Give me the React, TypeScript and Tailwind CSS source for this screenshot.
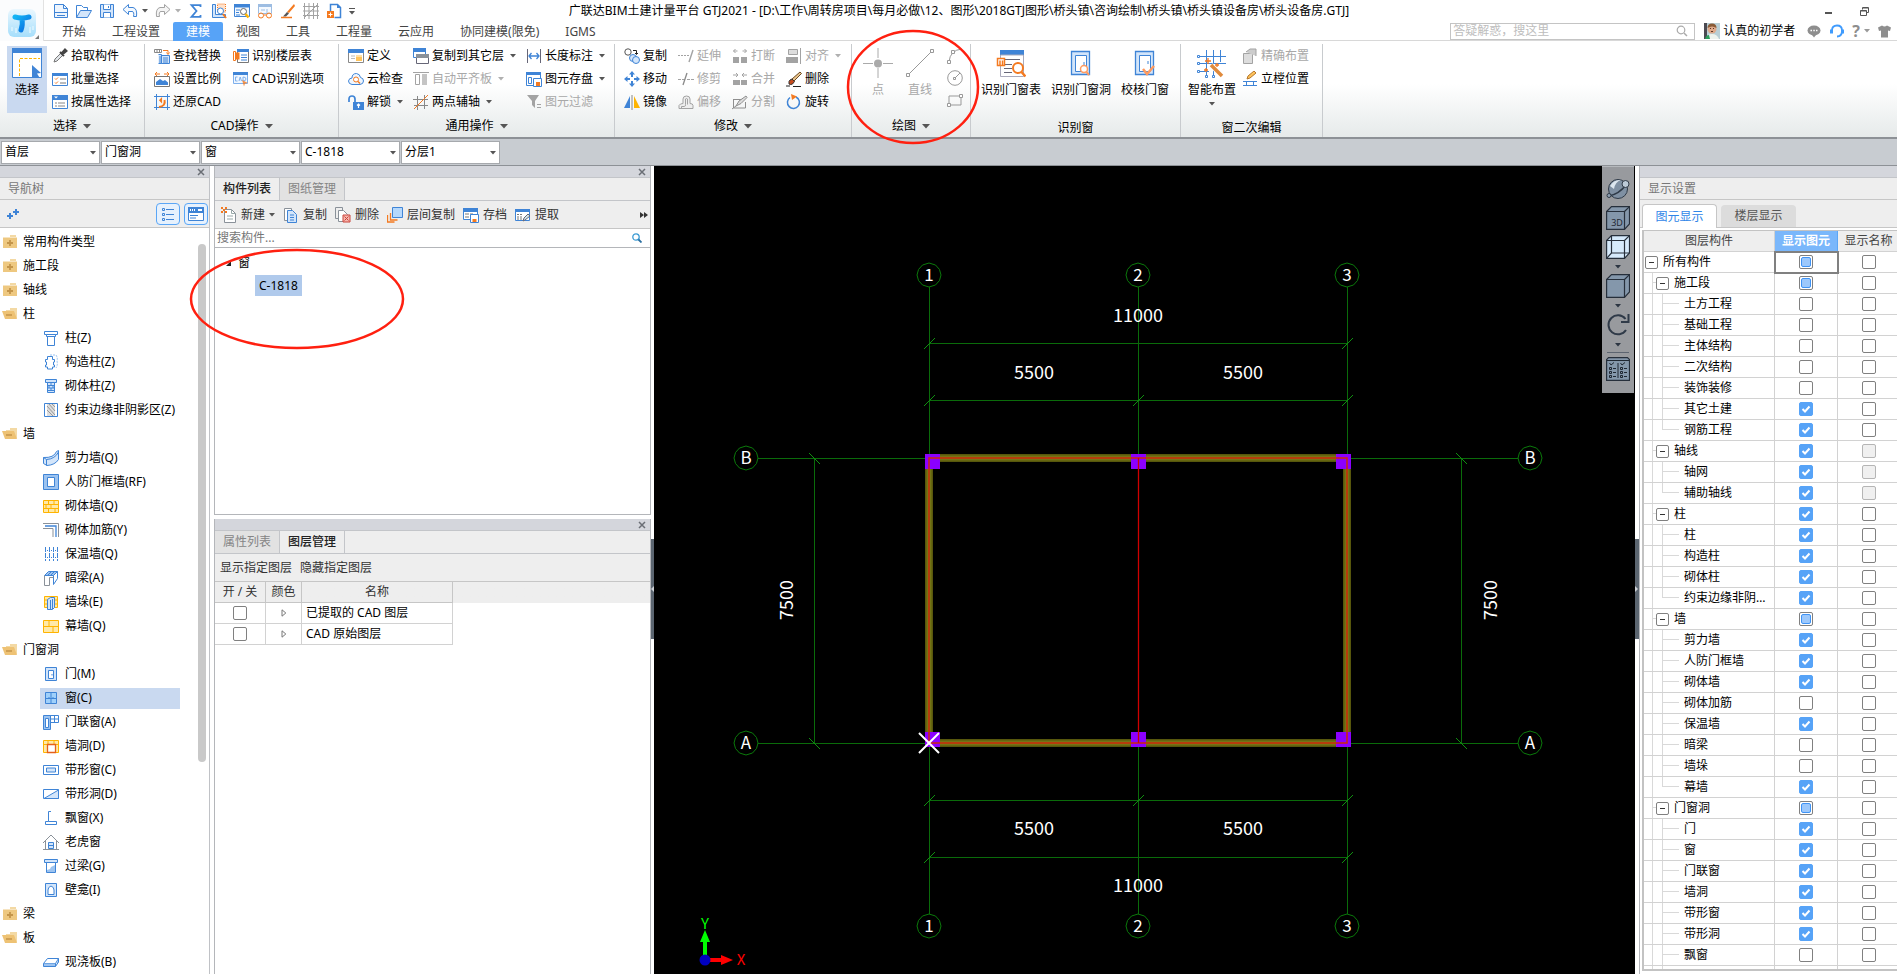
import { useState, type ReactNode } from "react"

const B = "#3f84d6"
const L = "#d3e5fa"
const O = "#f47a20"
const G = "#a3a3a3"
const Y = "#ffb400"

const ICONS: Record<string, ReactNode> = {
  newFile: <g stroke={B} fill="none"><path d="M1.5 1.5h9l4 4v9h-13z" fill="#eef5fd" /><path d="M10.5 1.5v4h4M1 9.5h13M4 12.5h8" /></g>,
  open: <g stroke={B} fill="none"><path d="M.5 14.5v-12h5l2 2h4v3" /><path d="M.5 14.5l4-7h11l-4 7z" fill={L} /></g>,
  save: <g stroke={B} fill="none"><path d="M1.5 1.5h13v13h-13z" fill={L} /><path d="M4.5 1.5v5h7v-5M4.5 14.5v-5h7v5M9.5 3v2" fill="#fff" /></g>,
  undo: <path d="M1 6.5L6.5 1.5v3H11q4.5 1 3.5 9h-3q1-5-1.5-5H6.5v3z" fill="#f3f8fe" stroke={B} />,
  redo: <path d="M15 6.5L9.5 1.5v3H5q-4.500 1-3.500 9h3q-1-5 1.500-5h3.500v3z" fill="#f4f4f4" stroke={G} />,
  sigma: <path d="M12.5 4V2.200H3.500L8.500 8l-5 5.800h9V12" fill="none" stroke={B} strokeWidth="1.8" />,
  reportFind: <g fill="none"><path d="M1.5 1.5h3v10h10v3h-13z" stroke={B} fill={L} /><path d="M6.5 1h8v8h-8z" fill="#ffe1ca" stroke={O} strokeDasharray="1 1" /><circle cx="9.5" cy="8" r="3" stroke={B} fill="#fff" /><path d="M12 11l3 4" stroke={O} strokeWidth="2" /></g>,
  winFind: <g fill="none"><path d="M.5 1.5h15v12H.5z" stroke={B} fill="#f4f9ff" /><path d="M0 1h16v3.500H0z" fill={B} /><path d="M2 7h4M2 9.5h3M2 12h4" stroke={B} /><circle cx="9.5" cy="8.5" r="3" stroke="#666" fill="#fff" /><path d="M11.5 11l3 3.500" stroke={Y} strokeWidth="2.5" /></g>,
  glasses: <g fill="none"><path d="M1.5 1.5h13v9h-13z" stroke="#9dbde2" fill="#f4f9ff" /><path d="M1 1h14v3H1z" fill="#9dbde2" /><path d="M4 7h4M10 6v4" stroke="#9dbde2" /><circle cx="4" cy="12.5" r="2.5" stroke={O} /><circle cx="12" cy="12.5" r="2.5" stroke={O} /><path d="M6.5 12h3" stroke={O} /></g>,
  brush: <g><path d="M14 1l1 2-6 7-2-1z" fill={O} /><path d="M7 9l2 1.500-3 3H3z" fill="#555" /><path d="M1 14.5h11" stroke={O} strokeWidth="1.5" /></g>,
  gridGray: <g stroke={G} fill="none"><path d="M1.500 0v16M6 0v16M10.500 0v16M14.500 0v16M0 3.500h16M0 8h16M0 12.500h16M1 15L15 1" /></g>,
  exportDoc: <g fill="none"><path d="M4.5 8V1.500h7l3 3v10h-6" stroke={B} strokeWidth="1.5" /><path d="M11 1v4h4z" fill={B} /><path d="M1 8h7v7H1z" fill={O} /><path d="M4.5 9.500v4M2.500 11.500h4" stroke="#fff" /></g>,
  pick: <g><path d="M2 14l1-3 6-6 2 2-6 6z" fill="#e2e6ea" stroke="#777" /><path d="M8 4l4 4M10 5l3-3.500 1.500 1.500L11 6z" stroke="#444" strokeWidth="2" fill="#444" /></g>,
  batch: <g fill="none"><path d="M.5 2.5h15v12H.5z" stroke={B} fill="#fff" /><path d="M0 2h16v3H0z" fill={B} /><path d="M3 7.500l1 1 2-2M3 11.500l1 1 2-2" stroke={O} /><path d="M8 8h6M8 12h6" stroke="#777" /></g>,
  props: <g fill="none"><path d="M.5 1.5h15v13H.5z" stroke={B} fill="#fff" /><path d="M0 1h16v5H0z" fill={B} /><path d="M2 2.500h4l-2 2z" fill="#fff" /><path d="M3 9h2M6 9h7M3 12h2M6 12h7" stroke="#888" /></g>,
  findReplace: <g fill="none"><path d="M.5 1.5h7v3h-7zM3 1.500v3M5.500 1.500v3" stroke="#888" /><path d="M9 2.500h5v3M12.500 4.500l1.500 2 1.500-2" stroke={O} /><path d="M4.500 6.500h3v9h-3M7.500 7.500h8v8h-8z" stroke={B} fill={L} /><path d="M9 10h5M9 12h5M9 14h5M6 8v7" stroke={B} /></g>,
  scale: <g fill="none"><path d="M.5 5.500h15v10H.5z" stroke="#777" fill="#fff" /><path d="M2 14v-3l4-3 3 2 2-1 3 2.500V14z" fill={B} /><path d="M3 1L1 3l2 2M1 3h5M13 1l2 2-2 2M15 3h-5" stroke={O} /></g>,
  restore: <g fill="none"><path d="M2.500 0v16M13.500 0v16M0 2.500h16M0 13.500h16" stroke={B} /><path d="M5 13q7-1 5.500-7" stroke={O} strokeWidth="2" /><path d="M5 8V3.500L9.500 8z" fill={O} transform="rotate(45 7 7)" /></g>,
  floorTable: <g fill="none"><path d="M4.500 1.500h11v13h-11z" stroke="#777" fill="#fff" /><path d="M4 1h12v3H4z" fill={B} /><path d="M8 7h6M8 9.500h6M8 12h6" stroke={B} /><path d="M.5 3.500h2v9h-2z" stroke={O} /><path d="M2.500 4.500h4v7h-4z" fill={O} /></g>,
  cadOpts: <g fill="none"><path d="M.5 1.5h14v11H.5z" stroke="#7fb0ec" fill="#f0f7ff" /><path d="M0 1h15v3H0z" fill={B} /><path d="M4.500 6H2.500v4h2M6 10l1.200-4L8.500 10M10 6v4q3 0 3-2t-3-2" stroke="#7fb0ec" /><path d="M9 9l6 3-3 .5-1 3z" fill={O} opacity=".8" /></g>,
  define: <g fill="none"><path d="M.5 1.5h15v13H.5z" stroke="#888" fill="#fff" /><path d="M0 1h16v4H0z" fill={B} /><path d="M3 8h4M3 10.500h4" stroke="#bbb" /><path d="M8 7h6v6H8z" fill="#ffc45c" /><path d="M8 7h6v2H8z" fill="#ffe0a5" /></g>,
  cloudCheck: <g fill="none"><path d="M4 13.500Q.5 13 .5 10 1 7 4 7q0-4.500 4.500-4.500Q12 3 12.500 6.500q3 .5 3 3.500t-3.500 3.500z" stroke={B} fill="#eef6ff" /><circle cx="8" cy="8.5" r="2.5" stroke={O} fill="#fff" /><path d="M10 10.500l2 2" stroke={O} strokeWidth="1.5" /></g>,
  unlock: <g fill="none"><path d="M5 8h11v8H5z" fill={B} /><path d="M7 8V5q0-3-3-3T1 5v3" stroke={B} strokeWidth="1.7" /><path d="M10.500 10v4M9 11.500l1.500-1.500 1.500 1.500" stroke="#fff" strokeWidth="1.2" /></g>,
  copyFloors: <g fill="none"><path d="M.5 1.5h12v8H.5z" stroke={B} fill="#fff" /><path d="M0 0h13v4H0z" fill={B} /><path d="M3.500 7.500h12v8h-12z" stroke="#667" fill="#fff" /><path d="M3 6h13v4H3z" fill="#8a9199" /></g>,
  alignSlab: <g fill="none"><path d="M0 1.5h16" stroke={G} /><path d="M2.500 3.500h4v10h-4z" stroke={G} /><path d="M9 3h5v11H9z" fill="#c4c4c4" /></g>,
  auxAxis: <g fill="none"><path d="M4.500 2v14M11.500 1v14M0 5.500h15M1 11.500h14" stroke="#888" /><path d="M1 15L15 1" stroke={O} /></g>,
  lengthDim: <g fill="none" stroke={B}><path d="M1.500 1v14M14.500 1v14" stroke="#667" /><path d="M3 8h10M5.500 5L3 8l2.500 3M10.500 5L13 8l-2.500 3" strokeWidth="1.3" /></g>,
  store: <g fill="none"><path d="M.5 1.5h14v13H.5z" stroke={B} fill="#fff" /><path d="M0 1h15v3H0z" fill={B} /><path d="M2.500 6.500h3v6h-3z" stroke={B} /><path d="M7.500 7.500h8v8h-8z" stroke={B} fill="#fff" /><path d="M10 11h4v4h-4z" fill={O} /></g>,
  filter: <g fill={G}><path d="M1 1h12L9 7v7l-3-3V7z" /><path d="M11 10h4v1h-4zM11 13h4v1h-4z" /></g>,
  copyObj: <g fill="none"><circle cx="4" cy="4" r="3.2" stroke="#555" /><path d="M9 2.500h3.500V6M11 5l1.500 1.500L14 5" stroke="#222" /><circle cx="9" cy="10" r="3.5" stroke={B} fill={L} /><circle cx="12" cy="12" r="3.5" stroke={B} fill={L} /></g>,
  move: <g fill={B}><path d="M8 0l3 3.500H5zM8 16l3-3.500H5zM0 8l3.500-3v6zM16 8l-3.500-3v6z" /><path d="M8 3v3M8 10v3M3 8h3M10 8h3" stroke={B} strokeWidth="2" /></g>,
  mirror: <g><path d="M6 2v12H0z" fill={B} /><path d="M10 2v12h6z" fill={Y} /><path d="M8 1v15" stroke="#888" /></g>,
  extend: <g stroke={G} fill="none"><path d="M0 7.500h11" strokeDasharray="2 1" /><path d="M11 14l4-12" strokeWidth="1.4" /></g>,
  trim: <g stroke={G} fill="none"><path d="M0 8.500h7M9 8.500h7" strokeDasharray="3 1" /><path d="M5 14l4-12" stroke="#888" strokeWidth="1.3" /></g>,
  offset: <g stroke={G} fill="none"><path d="M1 14.500v-3q1-2 4-2V5q0-3 3.500-3T12 5v4.500q3 0 3 2v3z" fill="#eee" /><path d="M3.500 14v-1.500h3q1 0 1-2V5q1-1 2 0v5.500" /></g>,
  breakIt: <g fill={G}><path d="M1 9h6v6H1zM9 9h6v6H9z" /><path d="M3.500 1L1.500 3l2 2M1.500 3h4M12.500 1l2 2-2 2M14.500 3h-4" stroke={G} fill="none" /></g>,
  merge: <g fill={G}><path d="M1 9h7v5H1zM9 9h6v5H9z" /><path d="M4 2l2 2-2 2M6 4H1M12 2l-2 2 2 2M10 4h5" stroke={G} fill="none" /></g>,
  split: <g stroke="#8e8e8e" fill="none"><path d="M1.500 5.500h9M1.500 5v9h12V8" /><path d="M4 12l3-5 7-5 1 1.500-6 6z" fill="#ddd" /><path d="M0 15l4-3" /></g>,
  alignObj: <g><path d="M2.500 1.500h9v5h-9z" fill="#ddd" stroke={G} /><path d="M0 9h12v6H0z" fill={G} /><path d="M14.500 0v16" stroke={G} /></g>,
  erase: <g><path d="M14 1l1.500 1.500L8 10 6 8z" fill="#e9c38b" stroke="#6b4a22" /><path d="M6 8l2.500 2.500L6.500 13q-2 1-3.500 0-.5-3 1-4z" fill="#c84c1e" stroke="#333" /><path d="M0 15h4M7 15.500h8" stroke="#222" /></g>,
  rotate: <g fill="none"><path d="M10 3a6 6 0 1 1-6 .5" stroke={B} strokeWidth="1.5" /><path d="M5 0l6 2.500L6 6z" fill={O} /></g>,
  precise: <g><path d="M1.500 5.500h9v10h-9z" fill="#ddd" stroke={G} /><path d="M4 4l4-3h6v7" fill="#ccc" stroke={G} /></g>,
  mullion: <g fill="none"><path d="M1 10.500h14M1 14.500h14M4.500 10v5M11.500 10v5" stroke={B} /><path d="M5 8l1-3 6-5 2 2-6 5z" fill="#ffc45c" stroke="#b5762a" /></g>,
  column: <g stroke={B} fill="#fff"><path d="M1.500 1.500h13v3h-13z" /><path d="M4.500 4.500h7v11h-7z" /><path d="M3.500 4.500h9v2h-9z" /></g>,
  structCol: <g stroke={B} fill="none"><path d="M7 1h6q2 3 1 6 1 4-1 7" stroke="#9cc3f0" strokeDasharray="2 1" /><path d="M4.500 2.500h5v3h2v2.500h-1v3h1v2h-2v2h-5v-2h-2v-2h1V8h-1V5.500h2z" fill="#fff" /></g>,
  brickCol: <g stroke={B} fill="none"><path d="M2.500 1.500h11v3h-11z" fill={L} /><path d="M4.500 4.500h7v10h-7zM4 7.500h8M4 10h8M4 12.500h8M8 5v2M6 8v2M10 8v2M8 10v2" fill={L} /></g>,
  hatch: <g fill="none"><path d="M1.500 1.500h13v13h-13z" stroke={B} /><path d="M4 2h8v12H4z" fill="#ddd" /><path d="M4 4l8 9M4 8l6 6M6 2l6 7M9 2l3 3" stroke="#999" /></g>,
  shearWall: <g stroke={B}><path d="M.5 7.500Q11 8 13.500 1.500l2-1v9Q12 15 4 15.500l-3.500-2z" fill={L} /><path d="M.5 7.500l3 2Q12 9 15.500 2M3.500 9.500v6" fill="none" /></g>,
  frameWall: <g><path d="M.5 .5h15v15H.5z" fill="#9cc3f0" stroke={B} /><path d="M4.500 3.500h7v9h-7z" fill="#fff" stroke={B} /></g>,
  brick: <g stroke={Y} fill="#ffe9a8"><path d="M.5 2.500h15v12H.5zM0 6.500h16M0 10.500h16M5.500 3v3.500M11 3v3.500M8 6.500v4M3 6.500v4M5.500 10.500v4M12 10.500v4" /></g>,
  rebar: <g fill="none"><path d="M0 1.500h15.500V15M0 6.500h10V15" stroke="#8a9199" /><path d="M2 4h11v11" stroke={B} strokeWidth="1.3" /></g>,
  insul: <g stroke={B} fill="none"><path d="M2.500 1v14M6.500 1v14M10.500 1v14M14.500 1v14" strokeDasharray="5 1" /><path d="M2 4.500h12M2 11.500h12" strokeDasharray="1 1" /></g>,
  beam: <g stroke={B}><path d="M1.500 5.500l4-4h9l-4 4z" fill="#9cc3f0" /><path d="M5 5l4-4M8 5l4-4M14.500 1.500v7l-4 6v-9" fill="none" /><path d="M1.500 5.500v10h5v-8h4" fill="none" stroke="#8a9199" /></g>,
  pier: <g><path d="M1.500 2.500h13v11h-13zM1 6h14M1 10h14" stroke={Y} fill="#ffe9a8" /><path d="M4.500 5.500l3-2h4v10l-2 2h-5z" fill={L} stroke={B} /><path d="M7.500 6v9M9.500 5v10" stroke={B} /></g>,
  curtain: <g stroke={Y} fill="#ffe9a8"><path d="M.5 2.500h15v12H.5zM0 8.500h16M6 3v5.500M10 8.500v6" /></g>,
  door: <g stroke={B}><path d="M2.500 1.500h11v13h-11z" fill={L} /><path d="M5.500 4.500h5v8h-5z" fill="#fff" /><path d="M9 8v1.500" /></g>,
  window: <g stroke={B} fill="#9fd0fb"><path d="M2.500 2.500h11v11h-11zM8 2v12M2 8.500h12M6 7v1M10 7v1" /></g>,
  doorWin: <g stroke={B} fill="none"><path d="M.5 1.500h7v14h-7z" fill="#9cc3f0" /><path d="M2.500 4.500h3v9h-3z" fill="#fff" /><path d="M7.500 1.500h8v7h-8zM11.500 1v7M8 5h8" /></g>,
  wallHole: <g><path d="M.5 2.500h15v12H.5zM0 6.500h16M5 3v3M11 3v3" stroke={Y} fill="#ffe9a8" /><path d="M4.500 6.500h8v8h-8z" fill="#fff" stroke="#e6611a" strokeWidth="1.3" /></g>,
  stripWin: <g stroke={B}><path d="M.5 3.500h15v9H.5z" fill="#fff" /><path d="M3.500 6h9v4h-9z" fill={L} /></g>,
  stripHole: <g stroke={B}><path d="M.5 3.500h15v9H.5z" fill="#fff" /><path d="M1 12.500L15.500 4v8.500z" fill={L} /></g>,
  bay: <path d="M8 1.500H5.500v10h-3v3h11v-3h-8" stroke={B} fill="none" />,
  dormer: <g fill="none"><path d="M0 9l8-8 8 8M2.500 7v8.500M13.500 7v8.500M0 15.500h16" stroke="#8a9199" /><path d="M5.500 8.500h5v6h-5zM5 11.500h6" stroke={B} fill={L} /></g>,
  lintel: <g stroke={B}><path d="M1.500 1.500h13v3h-13z" fill={L} /><path d="M3.500 4.500h9v10h-9z" fill="#fff" /><path d="M4 12l3-1 1-2 4-2v7H4z" fill="#9cc3f0" stroke="none" /></g>,
  niche: <g stroke={B}><path d="M2.500 1.500h11v13h-11z" fill={L} /><path d="M5 12.500V8q0-3 3-4 3 1 3 4v4.500z" fill="#fff" /></g>,
  slab: <g stroke={B}><path d="M.5 9.500l4-5h11l-3 5z" fill="#fff" /><path d="M.5 9.500v3h12v-3M12.500 12.500l3-4.500V4.500" fill="#9cc3f0" /></g>,
  create: <g fill="none"><path d="M3.500 2.500h7l4 4v9h-11z" stroke="#8a9199" fill="#fff" /><path d="M10.500 2.500v4h4M6 9h6M6 12h6" stroke="#9aa" /><path d="M0 0h2v2H0zM4 0h2v2H4zM2 2h2v2H2zM0 4h2v2H0zM4 4h2v2H4z" fill={O} /></g>,
  copyDoc: <g stroke={B} fill="#fff"><path d="M1.500 1.500h7v12h-7z" stroke="#8a9199" /><path d="M4.500 3.500h5l4 4v8h-9z" fill={L} /><path d="M7 8h4M7 10.500h4M7 13h4" /></g>,
  deleteDoc: <g fill="none"><path d="M.5 .5h7v11h-7z" stroke="#8a9199" /><path d="M3.500 3.500h5l4 4v7h-9z" stroke="#8a9199" fill="#fff" /><path d="M8 8h7v7H8z" fill="#f7b5ae" stroke="#c9453a" /><path d="M9.500 9.500l4 4M13.500 9.500l-4 4" stroke="#c9453a" /></g>,
  interCopy: <g fill="none"><path d="M.5 8v7h7M3.500 6v7h7" stroke={O} strokeWidth="1.3" /><path d="M5.500 .5h10v10h-10z" fill="#b5d8fc" stroke={B} /></g>,
  archive: <g fill="none"><path d="M.5 1.5h14v11H.5z" stroke={B} fill="#fff" /><path d="M0 1h15v4H0z" fill={B} /><path d="M2 7h4M2 10h4M7 7h3" stroke="#777" /><path d="M7.500 7.500h8v8h-8z" stroke={B} fill="#fff" /><path d="M9.500 12h4v3h-4z" fill={O} /></g>,
  extract: <g fill="none"><path d="M.5 2.500h14v11H.5z" stroke={B} fill="#fff" /><path d="M0 2h15v3H0z" fill={B} /><path d="M2 7.500h5M2 10h5M2 12h5" stroke="#777" strokeDasharray="2 1" /><path d="M8 14l1-3 4-4 2 2-5 4z" fill="#cfe4ea" stroke="#667" /></g>,
}

function Icon({ name, className = "size-4" }: { name: string; className?: string }) {
  return <svg viewBox="0 0 16 16" className={`shrink-0 ${className}`} aria-hidden="true">{ICONS[name]}</svg>
}

function Caret({ className = "text-[#555]" }: { className?: string }) {
  return <svg viewBox="0 0 6 4" className={`h-1 w-1.5 shrink-0 ${className}`} aria-hidden="true"><path d="M0 0h6L3 3.5z" fill="currentColor" /></svg>
}

function CloseIcon() {
  return (
    <svg viewBox="0 0 8 8" className="size-2" aria-hidden="true">
      <path d="M1 1l6 6M7 1L1 7" stroke="#6a6e75" strokeWidth="1.5" />
    </svg>
  )
}

type Tool = { icon: string; label: string; caret?: boolean; off?: boolean }

function ToolColumn({ tools }: { tools: Tool[] }) {
  return (
    <div className="flex flex-col items-start">
      {tools.map((t) => (
        <button key={t.label} disabled={t.off} className="flex h-[23px] items-center gap-[3px] whitespace-nowrap disabled:text-[#a8a8a8]">
          <Icon name={t.icon} />
          {t.label}
          {t.caret && <span className="ml-[3px] flex"><Caret className={t.off ? "text-[#b0b0b0]" : "text-[#555]"} /></span>}
        </button>
      ))}
    </div>
  )
}

function BigTool({ label, children, off, caret }: { label: string; children: ReactNode; off?: boolean; caret?: boolean }) {
  return (
    <button disabled={off} className="flex min-w-[30px] flex-col items-center gap-1 self-start whitespace-nowrap pt-1 leading-4 disabled:text-[#a8a8a8]">
      <svg viewBox="0 0 30 30" className="size-[30px]" aria-hidden="true">{children}</svg>
      {label}
      {caret && <Caret />}
    </button>
  )
}

function RibbonGroup({ label, width, gap, caret = true, children }: { label: string; width: string; gap: string; caret?: boolean; children: ReactNode }) {
  return (
    <div className={`flex shrink-0 flex-col border-r border-[#c8cbce] ${width}`}>
      <div className={`flex h-[69px] ${gap}`}>{children}</div>
      <div className={`flex h-6 items-center justify-center gap-1.5 ${caret ? "pt-0.5" : "pt-1.5"}`}>
        {label}
        {caret && <svg viewBox="0 0 8 5" className="h-[5px] w-2" aria-hidden="true"><path d="M0 0h8L4 4.5z" fill="#555" /></svg>}
      </div>
    </div>
  )
}

const QUICK: Tool[] = [
  { icon: "newFile", label: "新建工程" },
  { icon: "open", label: "打开" },
  { icon: "save", label: "保存" },
  { icon: "undo", label: "撤销", caret: true },
  { icon: "redo", label: "恢复", caret: true, off: true },
  { icon: "sigma", label: "汇总" },
  { icon: "reportFind", label: "查看工程量" },
  { icon: "winFind", label: "查看报表" },
  { icon: "glasses", label: "查看计算式" },
  { icon: "brush", label: "格式刷" },
  { icon: "gridGray", label: "轴网" },
  { icon: "exportDoc", label: "导出" },
]

const TABS = ["开始", "工程设置", "建模", "视图", "工具", "工程量", "云应用", "协同建模(限免)", "IGMS"]

function Header() {
  const [tab, setTab] = useState("建模")
  return (
    <header className="flex h-[41px] shrink-0 overflow-hidden bg-white">
      <div className="relative flex w-11 shrink-0 items-center justify-center border-r border-[#e2e2e2] bg-[#fbfcfd] pt-1">
        <svg viewBox="0 0 28 28" className="size-7" aria-hidden="true">
          <defs>
            <linearGradient id="logoBg" x1="0" y1="0" x2="0" y2="1"><stop offset="0" stopColor="#eaf7fe" /><stop offset="1" stopColor="#a5defb" /></linearGradient>
            <linearGradient id="logoT" x1="0" y1="0" x2="1" y2="1"><stop offset="0" stopColor="#12b4f5" /><stop offset="1" stopColor="#0a6de0" /></linearGradient>
          </defs>
          <rect width="28" height="28" rx="6" fill="url(#logoBg)" />
          <path d="M4 22v-4M8 24v-5M22 24v-6M25 21v-4" stroke="#d4f0fd" strokeWidth="2" />
          <path d="M7 8q7 2 14 0M14 9q1 7-1 12" stroke="url(#logoT)" strokeWidth="5" strokeLinecap="round" fill="none" />
        </svg>
        <svg viewBox="0 0 4 4" className="absolute bottom-0.5 right-1 size-1" aria-hidden="true"><path d="M4 0v4H0z" fill="#777" /></svg>
      </div>
      <div className="flex min-w-0 flex-1 flex-col">
        <div className="grid h-[22px] grid-cols-[1fr_auto_1fr] items-center pl-[9px] pr-8">
          <div className="flex items-center gap-[7px]">
            {QUICK.map((q) => (
              <button key={q.label} aria-label={q.label} className="flex items-center gap-1">
                <Icon name={q.icon} />
                {q.caret && <Caret className={q.off ? "text-[#b0b0b0]" : "text-[#555]"} />}
              </button>
            ))}
            <button aria-label="自定义快速访问" className="flex flex-col items-center gap-0.5">
              <span className="h-px w-1.5 bg-[#555]" />
              <Caret />
            </button>
          </div>
          <h1 className="whitespace-nowrap text-xs">广联达BIM土建计量平台 GTJ2021 - [D:\工作\周转房项目\每月必做\12、图形\2018GTJ图形\桥头镇\咨询绘制\桥头镇\桥头镇设备房\桥头设备房.GTJ]</h1>
          <div className="-mr-10 flex items-center justify-end gap-7">
            <button aria-label="最小化" className="pt-1"><span className="block h-0.5 w-[7px] bg-[#555]" /></button>
            <button aria-label="还原">
              <svg viewBox="0 0 9 9" className="size-[9px]" aria-hidden="true"><path d="M2.5 2.5v-2h6v5h-2M.5 3.5h6v5h-6zM.5 4h6M3 1h5" fill="none" stroke="#555" /></svg>
            </button>
            <button aria-label="关闭"><CloseIcon /></button>
          </div>
        </div>
        <div className="flex h-[19px] items-stretch border-b border-[#d8d8d8] pl-[5px]">
          <nav className="flex">
            {TABS.map((t) => (
              <button
                key={t}
                onClick={() => setTab(t)}
                className={`-mb-px whitespace-nowrap px-[13px] leading-4 ${t === tab ? "rounded-t-xs bg-[#57a3f7] text-white" : "text-[#444]"}`}
              >
                {t}
              </button>
            ))}
          </nav>
          <div className="ml-auto flex items-center pr-1.5">
            <label className="flex h-[17px] w-[245px] items-center border border-[#c4c4c4] pl-0.5 pr-1.5">
              <input aria-label="搜索帮助" placeholder="答疑解惑，搜这里" className="min-w-0 flex-1 outline-none placeholder:text-[#bdbdbd]" />
              <svg viewBox="0 0 12 12" className="size-3" aria-hidden="true"><circle cx="5" cy="5" r="3.8" fill="none" stroke="#aaa" strokeWidth="1.2" /><path d="M8 8l3 3" stroke="#aaa" strokeWidth="1.5" /></svg>
            </label>
            <svg viewBox="0 0 16 16" className="ml-[9px] size-4" aria-hidden="true">
              <path d="M0 0h16v16H0z" fill="#b9cfd6" />
              <path d="M0 0h3v16H0z" fill="#4b4a52" />
              <circle cx="8" cy="6" r="4.5" fill="#dfa98a" />
              <path d="M3.5 5q0-4.500 4.500-4.500T12.500 5Q8 2 3.500 5z" fill="#8a5a36" />
              <path d="M2 16q1-5 6-5t7 5z" fill="#eef3ee" />
              <path d="M1 16q1-4 4-4l1 4z" fill="#2c9d5c" />
              <path d="M6 5.500h1M9 5.500h1M7 8.500h2" stroke="#5b3522" />
            </svg>
            <span className="ml-[3px] whitespace-nowrap">认真的初学者</span>
            <button aria-label="消息" className="ml-3">
              <svg viewBox="0 0 14 14" className="size-3.5" aria-hidden="true"><ellipse cx="7" cy="6.5" rx="6.5" ry="5" fill="#8e8e8e" /><path d="M5 11h4l-2 2.5z" fill="#8e8e8e" /><path d="M3.500 6.500h1.500M6.300 6.500h1.500M9 6.500h1.500" stroke="#fff" strokeWidth="1.5" /></svg>
            </button>
            <button aria-label="客服" className="ml-[9px]">
              <svg viewBox="0 0 14 14" className="size-3.5" aria-hidden="true"><path d="M2 8V6.500q0-5 5-5t5 5q0 6-5 6" fill="none" stroke="#3f9bfd" strokeWidth="1.8" /><path d="M0 5.500h3v4H0zM11 5.500h3v4h-3z" fill="#3f9bfd" /></svg>
            </button>
            <button aria-label="帮助" className="ml-2 flex items-center gap-1 text-base font-bold leading-4 text-[#8e8e8e]">
              ?<Caret className="text-[#999]" />
            </button>
            <button aria-label="皮肤" className="ml-2">
              <svg viewBox="0 0 13 13" className="size-[13px]" aria-hidden="true"><path d="M4 .5q2.500 2 5 0l4 2-1 3.500-2-.5v7H3v-7l-2 .5L0 2.500z" fill="#8e8e8e" /></svg>
            </button>
          </div>
        </div>
      </div>
    </header>
  )
}

function Ribbon() {
  return (
    <section className="flex h-[98px] shrink-0 overflow-hidden border-b-2 border-[#8d9196] bg-linear-to-b from-white from-45% to-[#e6eaea] pt-[3px]">
      <RibbonGroup label="选择" width="w-[145px]" gap="gap-[5px] pl-[7px]">
        <button className="mt-0.5 flex h-[67px] w-10 flex-col items-center gap-1 bg-[#c9d9f0] pt-0.5 leading-4">
          <svg viewBox="0 0 30 30" className="size-[30px]" aria-hidden="true">
            <path d="M.5 .5h29v29H.5z" fill="#fff" stroke={B} />
            <path d="M0 0h30v5H0z" fill={B} />
            <path d="M7.500 28V10.500H28" stroke={Y} fill="none" strokeDasharray="3 1.5" />
            <path d="M20 17l9 8-4 .5 2.500 4H20z" fill={B} />
          </svg>
          选择
        </button>
        <ToolColumn tools={[{ icon: "pick", label: "拾取构件" }, { icon: "batch", label: "批量选择" }, { icon: "props", label: "按属性选择" }]} />
      </RibbonGroup>
      <RibbonGroup label="CAD操作" width="w-[194px]" gap="gap-3 pl-[9px]">
        <ToolColumn tools={[{ icon: "findReplace", label: "查找替换" }, { icon: "scale", label: "设置比例" }, { icon: "restore", label: "还原CAD" }]} />
        <ToolColumn tools={[{ icon: "floorTable", label: "识别楼层表" }, { icon: "cadOpts", label: "CAD识别选项" }]} />
      </RibbonGroup>
      <RibbonGroup label="通用操作" width="w-[276px]" gap="gap-2.5 pl-[9px]">
        <ToolColumn tools={[{ icon: "define", label: "定义" }, { icon: "cloudCheck", label: "云检查" }, { icon: "unlock", label: "解锁", caret: true }]} />
        <ToolColumn tools={[{ icon: "copyFloors", label: "复制到其它层", caret: true }, { icon: "alignSlab", label: "自动平齐板", caret: true, off: true }, { icon: "auxAxis", label: "两点辅轴", caret: true }]} />
        <ToolColumn tools={[{ icon: "lengthDim", label: "长度标注", caret: true }, { icon: "store", label: "图元存盘", caret: true }, { icon: "filter", label: "图元过滤", off: true }]} />
      </RibbonGroup>
      <RibbonGroup label="修改" width="w-[237px]" gap="gap-[11px] pl-[9px]">
        <ToolColumn tools={[{ icon: "copyObj", label: "复制" }, { icon: "move", label: "移动" }, { icon: "mirror", label: "镜像" }]} />
        <ToolColumn tools={[{ icon: "extend", label: "延伸", off: true }, { icon: "trim", label: "修剪", off: true }, { icon: "offset", label: "偏移", off: true }]} />
        <ToolColumn tools={[{ icon: "breakIt", label: "打断", off: true }, { icon: "merge", label: "合并", off: true }, { icon: "split", label: "分割", off: true }]} />
        <ToolColumn tools={[{ icon: "alignObj", label: "对齐", caret: true, off: true }, { icon: "erase", label: "删除" }, { icon: "rotate", label: "旋转" }]} />
      </RibbonGroup>
      <RibbonGroup label="绘图" width="w-[119px]" gap="gap-3 pl-[11px]">
        <BigTool label="点" off>
          <path d="M15 0v10M15 20v10M0 15.500h10M20 15.500h10" stroke="#aaa" />
          <circle cx="15" cy="15.5" r="4" fill="#aaa" />
        </BigTool>
        <BigTool label="直线" off>
          <g stroke="#999" fill="#fff"><path d="M3 27L27 3" /><path d="M1.500 25.500h3v3h-3zM25.500 1.500h3v3h-3z" /></g>
        </BigTool>
        <div className="flex flex-col gap-1.5 pt-1">
          <button disabled aria-label="弧线">
            <svg viewBox="0 0 16 16" className="size-4" aria-hidden="true"><g stroke="#999" fill="#fff"><path d="M2 14Q3 2 15 1" fill="none" /><path d="M.5 12.500h3v3h-3zM4.500 2.500h3v3h-3z" /></g></svg>
          </button>
          <button disabled aria-label="圆">
            <svg viewBox="0 0 16 16" className="size-4" aria-hidden="true"><g stroke="#999" fill="none"><circle cx="8" cy="8" r="7.3" /><path d="M8 8l5-5M6.500 7.500h2v2h-2z" /></g></svg>
          </button>
          <button disabled aria-label="矩形">
            <svg viewBox="0 0 16 16" className="size-4" aria-hidden="true"><g stroke="#999" fill="#fff"><path d="M2 4h12v9H2z" fill="none" /><path d="M.5 11.500h3v3h-3zM12.500 2.500h3v3h-3z" /></g></svg>
          </button>
        </div>
      </RibbonGroup>
      <RibbonGroup label="识别窗" width="w-[210px]" gap="gap-2.5 pl-2.5" caret={false}>
        <BigTool label="识别门窗表">
          <path d="M4 2h24v5H4z" fill={B} />
          <path d="M4.500 7h23v21.500h-23z" fill="#fff" stroke="#aab" />
          <path d="M8 11.500h16M8 16.500h8M8 20.500h8M8 24.500h8" stroke="#667" />
          <path d="M1.500 10.500h7v7h-7zM4 12.500v5M6.500 12.500v5" fill="#fff" stroke={O} strokeWidth="1.5" />
          <circle cx="22" cy="20" r="5" fill="#fff" stroke={O} strokeWidth="2" />
          <path d="M25.500 24l4 4.500" stroke={O} strokeWidth="2.5" />
        </BigTool>
        <BigTool label="识别门窗洞">
          <path d="M5.500 3.500h18v23h-18z" fill={L} stroke={B} strokeWidth="1.3" />
          <path d="M9.500 7.500h11v16h-11zM18 14v3" fill="#fff" stroke={B} />
          <circle cx="18" cy="21" r="3.5" fill="#fff" stroke="#ff9b60" strokeWidth="1.5" />
          <path d="M20.500 24l2.500 3" stroke="#ff9b60" strokeWidth="2" />
        </BigTool>
        <BigTool label="校核门窗">
          <path d="M5.500 3.500h18v23h-18z" fill={L} stroke={B} strokeWidth="1.3" />
          <path d="M9.500 7.500h11v16h-11zM18 13v3" fill="#fff" stroke={B} />
          <path d="M13 21l4 5 7-8" fill="none" stroke="#ff9b60" strokeWidth="2.5" />
        </BigTool>
      </RibbonGroup>
      <RibbonGroup label="窗二次编辑" width="w-[142px]" gap="gap-1.5 pl-[7px]" caret={false}>
        <BigTool label="智能布置" caret>
          <g stroke={B} fill="#fff">
            <path d="M2 8.500h27M2 15.500h27M2 23.500h10M9.500 2v26M16.500 2v26M23.500 2v12" fill="none" />
            <path d="M.5 7.500h2v2h-2zM.5 14.500h2v2h-2zM.5 22.500h2v2h-2zM8.500 27.500h2v2h-2zM15.500 27.500h2v2h-2z" />
          </g>
          <path d="M14 17l11 11" stroke="#fff" strokeWidth="5" />
          <path d="M14 17l11 11" stroke="#e08a3c" strokeWidth="3.5" />
          <path d="M11 10v6M8 13h6M20 15v4M18 17h4M9 20v4M7 22h4" stroke={O} strokeWidth="1.3" />
        </BigTool>
        <ToolColumn tools={[{ icon: "precise", label: "精确布置", off: true }, { icon: "mullion", label: "立樘位置" }]} />
      </RibbonGroup>
    </section>
  )
}

const SELECTS = [
  { label: "楼层", value: "首层" },
  { label: "构件大类", value: "门窗洞" },
  { label: "构件类型", value: "窗" },
  { label: "构件", value: "C-1818" },
  { label: "分层", value: "分层1" },
]

function SelectorBar() {
  return (
    <div className="flex h-[27px] shrink-0 items-center gap-px border-b border-[#8d9196] bg-[#c8ccd1] pl-px">
      {SELECTS.map((s) => (
        <div key={s.label} className="relative">
          <select aria-label={s.label} className="block h-[23px] w-[99px] appearance-none border border-[#a6a9ad] bg-white pl-[3px] outline-none">
            <option>{s.value}</option>
          </select>
          <span className="pointer-events-none absolute right-1 top-2.5 flex"><Caret /></span>
        </div>
      ))}
    </div>
  )
}

type NavItem = { label: string; icon: string; group?: boolean; open?: boolean }

const group = (label: string, open = false): NavItem => ({ label, icon: "", group: true, open })
const leaf = (label: string, icon: string): NavItem => ({ label, icon })

const NAV: NavItem[] = [
  group("常用构件类型"), group("施工段"), group("轴线"),
  group("柱", true),
  leaf("柱(Z)", "column"), leaf("构造柱(Z)", "structCol"), leaf("砌体柱(Z)", "brickCol"), leaf("约束边缘非阴影区(Z)", "hatch"),
  group("墙", true),
  leaf("剪力墙(Q)", "shearWall"), leaf("人防门框墙(RF)", "frameWall"), leaf("砌体墙(Q)", "brick"), leaf("砌体加筋(Y)", "rebar"),
  leaf("保温墙(Q)", "insul"), leaf("暗梁(A)", "beam"), leaf("墙垛(E)", "pier"), leaf("幕墙(Q)", "curtain"),
  group("门窗洞", true),
  leaf("门(M)", "door"), leaf("窗(C)", "window"), leaf("门联窗(A)", "doorWin"), leaf("墙洞(D)", "wallHole"), leaf("带形窗(C)", "stripWin"),
  leaf("带形洞(D)", "stripHole"), leaf("飘窗(X)", "bay"), leaf("老虎窗", "dormer"), leaf("过梁(G)", "lintel"), leaf("壁龛(I)", "niche"),
  group("梁"),
  group("板", true),
  leaf("现浇板(B)", "slab"),
]

function Folder({ open }: { open?: boolean }) {
  return (
    <svg viewBox="0 0 16 14" className="h-3.5 w-4 shrink-0" aria-hidden="true">
      {open ? (
        <g><path d="M8 1h7v10H4V3h4z" fill="#f3d9a4" /><path d="M0 4h12l3 8H3z" fill="#eec274" /><path d="M4 8h6" stroke="#c4954a" strokeWidth="1.5" /></g>
      ) : (
        <g><path d="M8 0h6v2H8z" fill="#f3d9a4" /><path d="M1 2.500h14v10.500H1z" fill="#eec880" /><path d="M8 5v6M5 8h6" stroke="#c4954a" strokeWidth="1.8" /></g>
      )}
    </svg>
  )
}

function DockHeader() {
  return (
    <div className="flex h-3 shrink-0 items-center justify-end border-b border-[#c3c5c9] bg-[#d4d6dc] pr-1">
      <button aria-label="关闭面板"><CloseIcon /></button>
    </div>
  )
}

function NavTree() {
  const [active, setActive] = useState("窗(C)")
  return (
    <aside className="flex w-[210px] shrink-0 flex-col border-r border-[#c0c2c6] bg-white">
      <DockHeader />
      <h2 className="flex h-[22px] shrink-0 items-center border-b border-[#c6c6c6] bg-[#eee] pl-2 text-[#777]">导航树</h2>
      <div className="flex h-7 shrink-0 items-center gap-1 border-b border-[#c6c6c6] bg-[#eee] pl-[7px] pr-px">
        <button aria-label="添加" className="mr-auto">
          <svg viewBox="0 0 12 12" className="size-3" aria-hidden="true"><path d="M3 5v6M0 8h6M9 1v6M6 4h6" stroke={B} strokeWidth="2" /></svg>
        </button>
        <button aria-label="列表视图" className="flex h-[22px] w-6 items-center justify-center rounded-sm border border-[#5aa6f6] bg-[#e6f1fd]">
          <svg viewBox="0 0 14 14" className="size-3.5" aria-hidden="true"><g stroke={B} fill="none"><path d="M1.500 1.500h2v2h-2zM1.500 6.500h2v2h-2zM1.500 11.500h2v2h-2zM5 2.500h8M5 7.500h8M5 12.500h8" /></g></svg>
        </button>
        <button aria-label="窗口视图" className="flex h-[22px] w-6 items-center justify-center rounded-sm border border-[#5aa6f6] bg-[#e6f1fd]">
          <svg viewBox="0 0 16 14" className="h-3.5 w-4" aria-hidden="true"><path d="M.5 .5h15v13H.5z" fill="#fff" stroke={B} /><path d="M0 0h16v6H0z" fill={B} /><path d="M2 3h1M4 3h1M6 3h1M10 3h4" stroke="#fff" strokeWidth="2" /><path d="M2 8.500h8M2 11h6" stroke={B} /></svg>
        </button>
      </div>
      <div className="flex min-h-0 flex-1 overflow-hidden pt-0.5">
        <ul className="flex-1">
          {NAV.map((n) => (
            <li key={n.label} className="flex h-6 items-center">
              {n.group ? (
                <button className="flex items-center gap-[5px] pl-0.5">
                  <Folder open={n.open} />
                  {n.label}
                </button>
              ) : (
                <button
                  onClick={() => setActive(n.label)}
                  className={`ml-10 flex h-[21px] w-[140px] items-center gap-1.5 whitespace-nowrap pl-[3px] ${n.label === active ? "bg-[#c9d9f0]" : ""}`}
                >
                  <Icon name={n.icon} />
                  {n.label}
                </button>
              )}
            </li>
          ))}
        </ul>
        <div className="mr-[3px] w-2 pt-3.5">
          <div className="h-[71%] rounded-full bg-[#c9c9c9]" />
        </div>
      </div>
    </aside>
  )
}

function PanelTabs({ tabs, initial }: { tabs: string[]; initial: string }) {
  const [tab, setTab] = useState(initial)
  return (
    <div className="flex h-[23px] shrink-0 border-b border-[#c3c5c9] bg-[#eee]">
      {tabs.map((t) => (
        <button
          key={t}
          onClick={() => setTab(t)}
          className={`border-r border-[#c3c5c9] px-2 ${t === tab ? "font-medium text-[#222]" : "bg-[#e2e2e2] text-[#858585]"}`}
        >
          {t}
        </button>
      ))}
    </div>
  )
}

function ComponentList() {
  const tools: Tool[] = [
    { icon: "create", label: "新建", caret: true },
    { icon: "copyDoc", label: "复制" },
    { icon: "deleteDoc", label: "删除" },
    { icon: "interCopy", label: "层间复制" },
    { icon: "archive", label: "存档" },
    { icon: "extract", label: "提取" },
  ]
  return (
    <section className="flex h-[349px] shrink-0 flex-col border border-t-0 border-[#b4b6ba] bg-white">
      <DockHeader />
      <PanelTabs tabs={["构件列表", "图纸管理"]} initial="构件列表" />
      <div className="flex h-7 shrink-0 items-center gap-2 border-b border-[#c6c6c6] bg-[#eee] pl-1.5 pr-0.5 text-[#333]">
        {tools.map((t) => (
          <button key={t.label} className="flex items-center gap-1 whitespace-nowrap">
            <Icon name={t.icon} />
            {t.label}
            {t.caret && <Caret />}
          </button>
        ))}
        <button aria-label="更多" className="ml-auto">
          <svg viewBox="0 0 8 6" className="h-1.5 w-2" aria-hidden="true"><path d="M0 0l4 3-4 3zM4 0l4 3-4 3z" fill="#333" /></svg>
        </button>
      </div>
      <label className="flex h-[19px] shrink-0 items-center border-b border-[#b4b6ba] pl-0.5 pr-2">
        <input aria-label="搜索构件" placeholder="搜索构件..." className="min-w-0 flex-1 outline-none placeholder:text-[#777]" />
        <svg viewBox="0 0 10 10" className="size-2.5" aria-hidden="true"><circle cx="4" cy="4" r="3.2" fill="none" stroke="#3b9bd4" strokeWidth="1.3" /><path d="M6.500 6.500l3 3" stroke="#2a6ea0" strokeWidth="1.8" /></svg>
      </label>
      <ul className="pt-[3px]">
        <li className="flex h-6 items-center gap-[7px] pl-[11px]">
          <svg viewBox="0 0 5 5" className="size-[5px]" aria-hidden="true"><path d="M5 0v5H0z" fill="#222" /></svg>
          窗
        </li>
        <li className="pl-10"><button className="h-[21px] bg-[#b0caec] px-1">C-1818</button></li>
      </ul>
    </section>
  )
}

function LayerPanel() {
  return (
    <section className="flex min-h-0 flex-1 flex-col border-x border-[#b4b6ba] bg-white">
      <DockHeader />
      <PanelTabs tabs={["属性列表", "图层管理"]} initial="图层管理" />
      <div className="flex h-7 shrink-0 items-center gap-2 border-b border-[#c6c6c6] bg-[#eee] pl-[5px] text-[#333]">
        <button>显示指定图层</button>
        <button>隐藏指定图层</button>
      </div>
      <div className="bg-linear-to-b from-[#eee] from-[21px] to-white to-[21px]">
        <table className="w-[238px] table-fixed border-separate border-spacing-0">
          <colgroup><col className="w-[51px]" /><col className="w-9" /><col /></colgroup>
          <thead>
            <tr className="text-[#333]">
              {["开 / 关", "颜色", "名称"].map((h) => (
                <th key={h} className="h-[21px] border-b border-r border-[#c6c6c6] p-0 font-normal leading-4">{h}</th>
              ))}
            </tr>
          </thead>
          <tbody>
            {["已提取的 CAD 图层", "CAD 原始图层"].map((name) => (
              <tr key={name}>
                <td className="h-[21px] border-b border-r border-[#d2d2d2] p-0"><Check label={name} value="off" /></td>
                <td className="border-b border-r border-[#d2d2d2] p-0">
                  <button aria-label={`${name} 颜色`} className="flex w-full justify-center">
                    <svg viewBox="0 0 6 8" className="h-2 w-1.5" aria-hidden="true"><path d="M1 .8v6.400L4.800 4z" fill="none" stroke="#777" /></svg>
                  </button>
                </td>
                <td className="border-b border-r border-[#d2d2d2] p-0 pl-1 leading-4">{name}</td>
              </tr>
            ))}
          </tbody>
        </table>
      </div>
    </section>
  )
}

type CheckValue = "on" | "off" | "part" | "disabled"

function Check({ label, value }: { label: string; value: CheckValue }) {
  const [state, setState] = useState(value)
  return (
    <span className="grid place-items-center">
      <input
        type="checkbox"
        aria-label={label}
        checked={state === "on"}
        disabled={state === "disabled"}
        onChange={() => setState(state === "on" ? "off" : "on")}
        className="col-start-1 row-start-1 size-3.5 appearance-none rounded-xs border border-[#808080] bg-white checked:border-[#57a3f7] checked:bg-[#57a3f7] disabled:border-[#b5b5b5] disabled:bg-[#f0f0f0]"
      />
      {state === "on" && (
        <svg viewBox="0 0 14 14" className="pointer-events-none col-start-1 row-start-1 size-3.5" aria-hidden="true"><path d="M3.500 7l2.500 2.500 4.500-5" fill="none" stroke="#fff" strokeWidth="2" /></svg>
      )}
      {state === "part" && <span className="pointer-events-none col-start-1 row-start-1 size-2.5 rounded-xs border border-[#3f93f5] bg-[#9cc8fc]" />}
    </span>
  )
}

const AXIS = "#0a6b0a"

function Bubble({ x, y, label }: { x: number; y: number; label: string }) {
  return (
    <g>
      <path
        d="M0-12L6.5-10 10.5-5.5 12 0 10.5 5.5 6.5 10 0 12-6.5 10-10.5 5.5-12 0-10.5-5.5-6.5-10z"
        transform={`translate(${x} ${y})`}
        fill="none"
        stroke="#0b7a0b"
      />
      <text x={x} y={y + 6} textAnchor="middle" fill="#fff" fontSize="17">{label}</text>
    </g>
  )
}

function Drawing() {
  const xs = [275, 484, 693]
  const yB = 292
  const yA = 577
  return (
    <svg viewBox="0 0 981 808" preserveAspectRatio="xMinYMin meet" className="block h-full w-full font-['Noto_Sans_CJK_SC',sans-serif]" role="img" aria-label="平面图">
      <g stroke={AXIS} fill="none">
        {xs.map((x) => <path key={x} d={`M${x}.5 121V${yB}M${x}.5 ${yA}V748`} />)}
        <path d={`M104 ${yB}.5H275M693 ${yB}.5H864M104 ${yA}.5H275M693 ${yA}.5H864`} />
        <path d="M160.500 292V577M807.500 292V577" />
        <path d="M275 177.500H693M275 234.500H693M275 634.500H693M275 691.500H693" />
      </g>
      <g stroke="#109010" fill="none">
        {[177, 234, 634, 691].map((y) =>
          xs.filter((x) => x !== 484 || y === 234 || y === 634).map((x) => <path key={`${x}-${y}`} d={`M${x - 5} ${y + 6}l11-11`} />)
        )}
        {[160, 807].map((x) => [yB, yA].map((y) => <path key={`${x}-${y}`} d={`M${x - 5} ${y - 5}l11 11`} />))}
      </g>

      {/* walls */}
      <path d="M275 292H693V577H275z" fill="none" stroke="#57570c" strokeWidth="8" />
      <path d="M275 292H693V577H275z" fill="none" stroke="#747414" strokeWidth="5" />
      <g fill="#8b00ff">
        {[[271, 288], [477, 288], [682, 288], [271, 566], [477, 566], [682, 566]].map(([x, y]) => (
          <rect key={`${x}-${y}`} x={x} y={y} width="15" height="15" />
        ))}
      </g>
      <path d="M275 292H693V577H275z" fill="none" stroke="#cc2a0a" strokeWidth="1.5" />
      <path d="M484.500 292V577" stroke="#d00000" strokeWidth="1.3" />
      <path d="M265 567l20 20M285 567l-20 20" stroke="#fff" strokeWidth="2" />

      {xs.map((x, i) => (
        <g key={x}>
          <Bubble x={x} y={109} label={String(i + 1)} />
          <Bubble x={x} y={760} label={String(i + 1)} />
        </g>
      ))}
      {[92, 876].map((x) => (
        <g key={x}>
          <Bubble x={x} y={yB} label="B" />
          <Bubble x={x} y={yA} label="A" />
        </g>
      ))}
      <g fill="#fff" fontSize="18" textAnchor="middle">
        <text x="484" y="156">11000</text>
        <text x="380" y="213">5500</text>
        <text x="589" y="213">5500</text>
        <text x="380" y="669">5500</text>
        <text x="589" y="669">5500</text>
        <text x="484" y="726">11000</text>
        <text transform="translate(139 434) rotate(-90)">7500</text>
        <text transform="translate(843 434) rotate(-90)">7500</text>
      </g>

      {/* coordinate gizmo */}
      <path d="M49 776h4v14h-4z" fill="#0f0" />
      <path d="M51 764l5 12H46z" fill="#0f0" />
      <path d="M55 792h12v4H55z" fill="#f00" />
      <path d="M79 794l-12-5v10z" fill="#f00" />
      <circle cx="51" cy="794" r="5.5" fill="#0000c0" />
      <text x="51" y="763" textAnchor="middle" fontSize="15" fill="#0f0">Y</text>
      <text x="87" y="799" textAnchor="middle" fontSize="15" fill="#f00">X</text>
    </svg>
  )
}

function Cube({ wire, text }: { wire?: boolean; text?: boolean }) {
  return (
    <svg viewBox="0 0 24 24" className="size-6" aria-hidden="true">
      <g stroke="#262f3b" strokeWidth="1.2" fill={wire ? "#d6eafc" : "#8497ab"}>
        <path d="M.6 5.500L5.500 .6h18V18l-5 5.400H.6z" />
        <path d="M.6 5.500h17.900v17.900M18.500 5.500l5-4.900" fill="none" />
        {wire && <path d="M5.500 .6V18h18M5.500 18L.6 23.400" fill="none" />}
      </g>
      {text && <text x="11" y="20" fontSize="9" textAnchor="middle" fill="#1f2732">3D</text>}
    </svg>
  )
}

function ViewToolbar() {
  const caret = <span className="flex h-[15px] items-center"><Caret className="text-[#2c3542]" /></span>
  return (
    <div className="absolute right-px top-0 flex w-8 flex-col items-center border-t border-[#b5b8bc] bg-[#989a9e] pb-3 pt-2.5">
      <button aria-label="动态观察">
        <svg viewBox="0 0 24 24" className="size-6" aria-hidden="true">
          <circle cx="12" cy="12" r="9.5" fill="#7f90a3" stroke="#2f3a48" />
          <path d="M4 9q4-7 11-6-6 2-7 9z" fill="#dce6ef" />
          <path d="M3 19Q13 17 20 8" fill="none" stroke="#2f3a48" strokeWidth="1.5" />
          <circle cx="19.5" cy="7" r="3.5" fill="#bccad8" stroke="#2f3a48" />
          <circle cx="3" cy="18.5" r="2" fill="#8fa0b2" stroke="#2f3a48" />
        </svg>
      </button>
      <button aria-label="三维" className="mt-[5px]"><Cube text /></button>
      <button aria-label="线框" className="mt-[5px]"><Cube wire /></button>
      {caret}
      <button aria-label="视图方向"><Cube /></button>
      {caret}
      <button aria-label="旋转视图">
        <svg viewBox="0 0 24 24" className="size-6" aria-hidden="true"><path d="M19.500 6A9.500 9.500 0 1 0 20 17" fill="none" stroke="#2f3a48" strokeWidth="2" /><path d="M22.500 1v8H15" fill="none" stroke="#2f3a48" strokeWidth="2" /></svg>
      </button>
      {caret}
      <span className="h-px w-[22px] bg-[#5c6470]" />
      <button aria-label="显示设置" className="mt-1">
        <svg viewBox="0 0 24 24" className="size-6" aria-hidden="true">
          <path d="M.6 2.600L2.500 .6h19l2 2v20.800H.6z" fill="#8497ab" stroke="#262f3b" strokeWidth="1.2" />
          <g stroke="#1f2732" fill="none"><path d="M1 3.500h22M12 6v15M3.500 6l1.500 2 3-2.500M14.500 6l1.500 2 3-2.500M3.500 10.500h2v2h-2zM3.500 14.500h2v2h-2zM3.500 18.500h2v2h-2zM14.500 10.500h2v2h-2zM14.500 14.500h2v2h-2zM14.500 18.500h2v2h-2zM7 11.500h3M7 15.500h3M7 19.500h3M18 11.500h3M18 15.500h3M18 19.500h3" /></g>
        </svg>
      </button>
    </div>
  )
}

function Splitter({ side, className }: { side: "left" | "right"; className: string }) {
  return (
    <div className={`flex shrink-0 flex-col bg-white pt-[373px] ${className}`}>
      <button aria-label={side === "left" ? "收起左侧" : "收起右侧"} className="flex h-[100px] w-full items-center bg-[#5b6570]">
        <svg viewBox="0 0 3 6" className="h-1.5 w-[3px]" aria-hidden="true"><path d={side === "left" ? "M3 0v6L0 3z" : "M0 0v6l3-3z"} fill="#ccd0d5" /></svg>
      </button>
    </div>
  )
}

type Row = { name: string; level: 0 | 1 | 2; show: CheckValue; label?: CheckValue; last?: boolean }

const row = (name: string, level: 0 | 1 | 2, show: CheckValue, extra: Partial<Row> = {}): Row => ({ name, level, show, ...extra })

const ROWS: Row[] = [
  row("所有构件", 0, "part"),
  row("施工段", 1, "part"),
  row("土方工程", 2, "off"), row("基础工程", 2, "off"), row("主体结构", 2, "off"), row("二次结构", 2, "off"), row("装饰装修", 2, "off"),
  row("其它土建", 2, "on"), row("钢筋工程", 2, "on", { last: true }),
  row("轴线", 1, "on", { label: "disabled" }),
  row("轴网", 2, "on", { label: "disabled" }), row("辅助轴线", 2, "on", { label: "disabled", last: true }),
  row("柱", 1, "on"),
  row("柱", 2, "on"), row("构造柱", 2, "on"), row("砌体柱", 2, "on"), row("约束边缘非阴影区", 2, "on", { last: true }),
  row("墙", 1, "part"),
  row("剪力墙", 2, "on"), row("人防门框墙", 2, "on"), row("砌体墙", 2, "on"), row("砌体加筋", 2, "off"), row("保温墙", 2, "on"),
  row("暗梁", 2, "off"), row("墙垛", 2, "off"), row("幕墙", 2, "on", { last: true }),
  row("门窗洞", 1, "part"),
  row("门", 2, "on"), row("窗", 2, "on"), row("门联窗", 2, "on"), row("墙洞", 2, "on"), row("带形窗", 2, "on"), row("带形洞", 2, "on"),
  row("飘窗", 2, "off"), row("老虎窗", 2, "off"),
]

function Branch({ width, last }: { width: string; last?: boolean }) {
  return (
    <span className={`flex h-full shrink-0 flex-col ${width}`}>
      <span className="h-2.5 border-b border-l border-[#d9d9d9]" />
      <span className={`flex-1 ${last ? "" : "border-l border-[#d9d9d9]"}`} />
    </span>
  )
}

function TreeCell({ r }: { r: Row }) {
  return (
    <div className="flex h-5 items-center pl-px">
      {r.level === 1 && <span className="ml-[7px] flex h-full"><Branch width="w-1" /></span>}
      {r.level === 2 && (
        <>
          <span className="ml-[7px] h-full w-2.5 shrink-0 border-l border-[#d9d9d9]" />
          <Branch width="w-[17px]" last={r.last} />
        </>
      )}
      {r.level < 2 && (
        <button aria-label={`折叠 ${r.name}`} className="flex size-[13px] shrink-0 items-center justify-center rounded-xs border border-[#808080] bg-white">
          <span className="h-px w-[5px] bg-[#333]" />
        </button>
      )}
      <span className={`truncate ${r.level === 2 ? "ml-[5px] mr-[7px]" : "ml-[5px]"}`}>{r.name}</span>
    </div>
  )
}

function DisplaySettings() {
  const [tab, setTab] = useState("图元显示")
  return (
    <aside className="flex w-[258px] shrink-0 flex-col overflow-hidden border-l border-[#b4b6ba] bg-white">
      <div className="h-3 shrink-0 border-b border-[#c3c5c9] bg-[#d4d6dc]" />
      <h2 className="flex h-[22px] shrink-0 items-center border-b border-[#c6c6c6] bg-[#eee] pl-2 text-[#777]">显示设置</h2>
      <div className="flex h-7 shrink-0 items-end gap-1 border-b border-[#c6c6c6] bg-[#eee] pl-0.5">
        {["图元显示", "楼层显示"].map((t) => (
          <button
            key={t}
            onClick={() => setTab(t)}
            className={`w-[75px] rounded-t-sm ${t === tab ? "-mb-px h-6 border border-b-0 border-[#c6c6c6] bg-white text-[#2f86e8]" : "h-[22px] bg-[#dcdcdc] text-[#555]"}`}
          >
            {t}
          </button>
        ))}
      </div>
      <div className="mb-[3px] ml-0.5 mt-0.5 min-h-0 flex-1 overflow-hidden border-b-2 border-l-2 border-t border-[#c3c3c3]">
        <table className="w-[256px] table-fixed border-separate border-spacing-0">
          <colgroup><col className="w-[131px]" /><col className="w-[63px]" /><col /></colgroup>
          <thead>
            <tr className="bg-[#eee] text-[#444]">
              <th className="h-[21px] border-b border-r border-[#d2d2d2] p-0 font-normal leading-4">图层构件</th>
              <th className="border-b border-r border-[#5ca6f5] bg-[#7ab7fb] p-0 font-bold leading-4 text-white">显示图元</th>
              <th className="border-b border-r border-[#d2d2d2] p-0 font-normal leading-4">显示名称</th>
            </tr>
          </thead>
          <tbody>
            {ROWS.map((r, i) => (
              <tr key={i}>
                <td className="h-[21px] border-b border-r border-[#d2d2d2] p-0">
                  <TreeCell r={r} />
                </td>
                <td className={`border-b border-r border-[#d2d2d2] p-0 ${i === 0 ? "outline-2 -outline-offset-1 outline-[#808080]" : ""}`}>
                  <Check label={`${r.name} 显示图元`} value={r.show} />
                </td>
                <td className="border-b border-r border-[#d2d2d2] p-0">
                  <Check label={`${r.name} 显示名称`} value={r.label ?? "off"} />
                </td>
              </tr>
            ))}
          </tbody>
        </table>
      </div>
    </aside>
  )
}

export default function App() {
  return (
    <div className="relative flex h-screen flex-col overflow-hidden bg-white font-['Noto_Sans','Noto_Sans_CJK_SC',sans-serif] text-xs text-black">
      <Header />
      <Ribbon />
      <SelectorBar />
      <main className="flex min-h-0 flex-1">
        <NavTree />
        <div className="ml-1 flex w-[437px] shrink-0 flex-col gap-1">
          <ComponentList />
          <LayerPanel />
        </div>
        <Splitter side="left" className="w-[3px]" />
        <div className="relative min-w-0 flex-1 bg-black">
          <Drawing />
          <ViewToolbar />
        </div>
        <Splitter side="right" className="w-1" />
        <DisplaySettings />
      </main>

      {/* review marks over the draw group and the component list */}
      <svg viewBox="0 0 134 116" className="pointer-events-none absolute left-[846px] top-[29px] h-[116px] w-[134px]" aria-hidden="true">
        <ellipse cx="67" cy="58" rx="65" ry="56" fill="none" stroke="#ff2010" strokeWidth="2.5" />
      </svg>
      <svg viewBox="0 0 216 102" className="pointer-events-none absolute left-[189px] top-[248px] h-[102px] w-[216px]" aria-hidden="true">
        <ellipse cx="108" cy="51" rx="106" ry="49" fill="none" stroke="#ff2010" strokeWidth="2.5" />
      </svg>
    </div>
  )
}
